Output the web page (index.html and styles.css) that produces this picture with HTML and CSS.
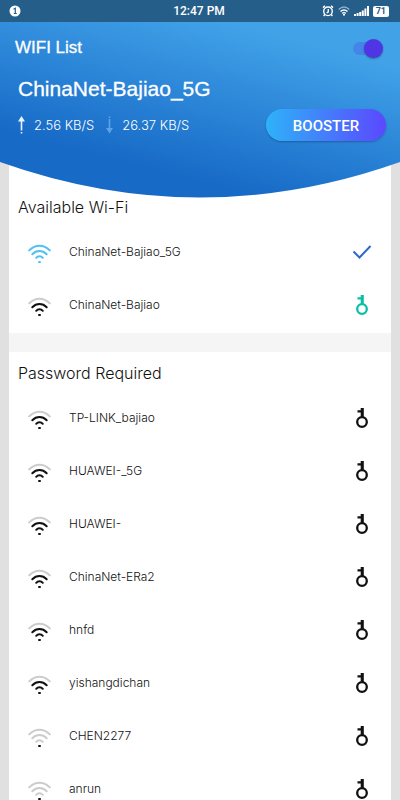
FILE: index.html
```html
<!DOCTYPE html>
<html lang="en">
<head>
<meta charset="utf-8">
<meta name="viewport" content="width=device-width, initial-scale=1">
<title>WIFI List</title>
<link rel="stylesheet" href="styles.css">
</head>
<body>
<svg class="defs" aria-hidden="true">
  <symbol id="wifi" viewBox="0 0 24 20">
    <path class="arc outer" d="M1.200 6.400C7.500 .2 15.500 .2 21.800 6.400"/>
    <path class="arc middle" d="M4.300 10.200C8.500 6 14.500 6 18.700 10.200"/>
    <path class="arc inner" d="M8.200 13.800C10 11.600 13 11.600 14.800 13.800"/>
    <rect class="dot" x="10" y="17" width="3" height="2" rx="1"/>
  </symbol>
  <symbol id="key" viewBox="0 0 12 20">
    <circle cx="6" cy="14" r="4.800" fill="none" stroke="currentColor" stroke-width="2.300"/>
    <path d="M4.700 0H7.800V9H4.700V4.500H1.500V2.300H4.700Z" fill="currentColor"/>
  </symbol>
</svg>
<div class="screen">
  <header class="hero">
    <svg class="hero-bg" viewBox="0 0 400 198" preserveAspectRatio="none" aria-hidden="true">
      <defs>
        <linearGradient id="sky" gradientUnits="userSpaceOnUse" x1="225" y1="22" x2="185" y2="178">
          <stop offset="0" stop-color="#41a2e8"/>
          <stop offset=".5" stop-color="#2c86d8"/>
          <stop offset="1" stop-color="#176ac6"/>
        </linearGradient>
      </defs>
      <path d="M0 0H400V162Q200 233 0 162Z" fill="url(#sky)"/>
    </svg>
    <div class="status">
      <svg class="notice" viewBox="0 0 12 12" aria-hidden="true"><circle cx="6" cy="6" r="5.500" fill="#fff"/><path d="M4.500 4.300L6.300 3.300V8.500M4.800 8.500H7.800" fill="none" stroke="#265e8a" stroke-width="1.200"/></svg>
      <time class="clock">12:47 PM</time>
      <div class="indicators">
        <svg width="12" height="12" viewBox="0 0 12 12" fill="none" stroke="#fff" stroke-width="1.400" aria-hidden="true"><circle cx="6" cy="6.300" r="4.300"/><path d="M1 2.600L3 .9M11 2.600L9 .9M6.300 4V6.800L4.700 8M2.700 9.500L1.700 11M9.300 9.500L10.300 11"/></svg>
        <svg width="12" height="10" viewBox="0 0 12 10" fill="none" stroke="#fff" stroke-width="1.400" aria-hidden="true"><path d="M.7 3.500C4 .5 8 .5 11.300 3.500" opacity=".5"/><path d="M2.500 5.500C4.700 3.500 7.300 3.500 9.500 5.500M4.200 7.400C5.400 6.400 6.600 6.400 7.800 7.400"/><path d="M5 8.800H7"/></svg>
        <svg width="15" height="10" viewBox="0 0 15 10" fill="#fff" aria-hidden="true"><path d="M0 8h2v2H0zM2.600 7h2v3h-2zM5.200 6h2v4h-2zM7.800 4.500h2V10h-2zM10.400 2.500h2V10h-2zM13 0h2v10h-2z"/></svg>
        <span class="battery">71</span>
      </div>
    </div>
    <div class="titlebar">
      <h1>WIFI List</h1>
      <input class="switch" type="checkbox" role="switch" aria-label="Wi-Fi" checked>
    </div>
    <div class="current">
      <h2>ChinaNet-Bajiao_5G</h2>
      <div class="stats">
        <svg width="7" height="18" viewBox="0 0 7 18" fill="#e8f2fc" aria-hidden="true"><path d="M3.500 0L7 5.500H4.300V14.500H2.700V5.500H0Z"/><path d="M2.700 16h1.600v1.500H2.700z"/></svg>
        <span class="rate up">2.56 KB/S</span>
        <svg width="7" height="18" viewBox="0 0 7 18" fill="#5ba4ea" aria-hidden="true"><path d="M2.700 .5h1.600V2H2.700zM2.700 3h1.600V12H7L3.500 17.500L0 12H2.700z"/></svg>
        <span class="rate">26.37 KB/S</span>
        <button class="boost" type="button">BOOSTER</button>
      </div>
    </div>
  </header>
  <main class="sheet">
    <section class="group">
      <h3>Available Wi-Fi</h3>
      <ul>
        <li class="connected"><svg class="wifi"><use href="#wifi"/></svg><span>ChinaNet-Bajiao_5G</span><svg class="check" viewBox="0 0 20 14" aria-hidden="true"><path d="M1.500 6.500L7.500 12.500L18.500 1"/></svg></li>
        <li class="open"><svg class="wifi"><use href="#wifi"/></svg><span>ChinaNet-Bajiao</span><svg class="key"><use href="#key"/></svg></li>
      </ul>
    </section>
    <section class="group">
      <h3>Password Required</h3>
      <ul>
        <li><svg class="wifi"><use href="#wifi"/></svg><span>TP-LINK_bajiao</span><svg class="key"><use href="#key"/></svg></li>
        <li><svg class="wifi"><use href="#wifi"/></svg><span>HUAWEI-_5G</span><svg class="key"><use href="#key"/></svg></li>
        <li><svg class="wifi"><use href="#wifi"/></svg><span>HUAWEI-</span><svg class="key"><use href="#key"/></svg></li>
        <li><svg class="wifi"><use href="#wifi"/></svg><span>ChinaNet-ERa2</span><svg class="key"><use href="#key"/></svg></li>
        <li><svg class="wifi"><use href="#wifi"/></svg><span>hnfd</span><svg class="key"><use href="#key"/></svg></li>
        <li><svg class="wifi"><use href="#wifi"/></svg><span>yishangdichan</span><svg class="key"><use href="#key"/></svg></li>
        <li class="weak"><svg class="wifi"><use href="#wifi"/></svg><span>CHEN2277</span><svg class="key"><use href="#key"/></svg></li>
        <li class="weak"><svg class="wifi"><use href="#wifi"/></svg><span>anrun</span><svg class="key"><use href="#key"/></svg></li>
      </ul>
    </section>
  </main>
</div>
</body>
</html>
```
FILE: styles.css
```css
* { box-sizing: border-box; }
body {
  margin: 0;
  background: #e0e0e0;
  color: #111;
  font-family: Inter, "Liberation Sans", sans-serif;
}
h1, h2, h3, ul { margin: 0; padding: 0; font-weight: 400; }
svg { flex: none; display: block; }
.defs { display: none; }
.screen {
  height: 100vh;
  overflow-y: auto;
  scrollbar-width: none;
}

/* Header */
.hero {
  position: relative;
  z-index: 1;
  color: #fff;
  height: 162px;
}
.hero-bg {
  position: absolute;
  z-index: -1;
  top: 0;
  left: 0;
  width: 100%;
  height: 198px;
}
.status {
  display: grid;
  grid-template-columns: 1fr auto 1fr;
  align-items: center;
  height: 22px;
  padding: 0 11px 0 9px;
  background: #265e8a;
}
.notice { width: 12px; height: 12px; }
.clock { font: 500 12px/22px Roboto, sans-serif; }
.indicators {
  display: flex;
  align-items: center;
  justify-content: flex-end;
  gap: 4px;
}
.battery {
  padding: 0 3px;
  border-radius: 2px;
  background: #fff;
  color: #265e8a;
  font: 700 9px/11px Roboto, sans-serif;
}
.titlebar {
  display: flex;
  align-items: center;
  justify-content: space-between;
  height: 52px;
  padding: 0 17px 0 15px;
}
h1, h2 {
  font-family: "Liberation Sans", sans-serif;
  -webkit-text-stroke: 0.3px;
}
h1 { font-size: 17px; line-height: 20px; }
h2 { font-size: 21px; line-height: 26px; }
.switch {
  appearance: none;
  display: flex;
  align-items: center;
  justify-content: flex-end;
  width: 30px;
  height: 13px;
  margin: 0;
  border-radius: 7px;
  background: #4485e8;
}
.switch::before {
  content: "";
  width: 19px;
  height: 19px;
  border-radius: 50%;
  background: #4f35e3;
  box-shadow: 0 1px 2px #0005;
}
.switch:not(:checked) { justify-content: flex-start; }
.current { padding: 2px 14px 0 18px; }
.stats {
  display: flex;
  align-items: center;
  height: 46px;
}
.rate { margin-left: 9px; font-size: 13px; font-weight: 300; }
.up { margin-right: 12px; }
.boost {
  width: 120px;
  height: 32px;
  margin-left: auto;
  border: 0;
  border-radius: 16px;
  background: linear-gradient(90deg, #2eb2f8, #5b48ff);
  box-shadow: 0 1px 2px #0004;
  color: #fff;
  font: 500 15px/32px Roboto, sans-serif;
}

/* Network list */
.sheet { margin: 0 9px; background: #f5f5f5; }
.group {
  background: #fff;
  padding: 3px 0 2px;
}
.group:first-child { padding-top: 27px; }
.group + .group { margin-top: 19px; }
h3 {
  padding-left: 9px;
  font-size: 16px;
  font-weight: 300;
  line-height: 36px;
}
li {
  display: flex;
  align-items: center;
  height: 53px;
  padding: 0 19px;
  font-size: 12px;
  font-weight: 300;
}
li span { flex: 1; margin-left: 17px; }
.wifi { width: 24px; height: 20px; margin-top: 4px; }
.arc {
  fill: none;
  stroke: var(--arc, #111);
  stroke-width: 2;
  stroke-linecap: round;
}
.outer { stroke: var(--outer, #ccc); }
.dot { fill: var(--dot, #111); }
.connected { --arc: #4fc0f5; --outer: #4fc0f5; --dot: #4fc0f5; }
.weak { --arc: #ccc; }
.key { width: 12px; height: 20px; margin-right: 4px; }
.open .key { color: #0bbfa5; }
.check {
  width: 20px;
  height: 14px;
  fill: none;
  stroke: #2a69cc;
  stroke-width: 2;
}
```
